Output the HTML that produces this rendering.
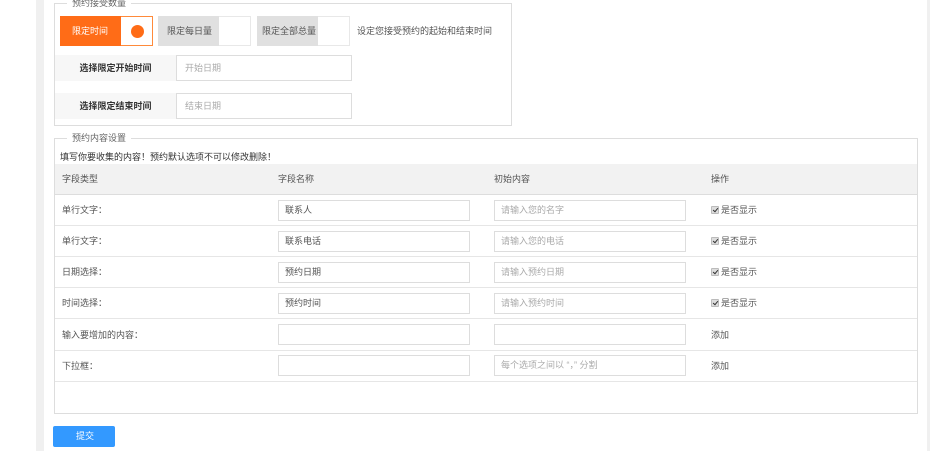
<!DOCTYPE html>
<html><head><meta charset="utf-8"><style>
*{margin:0;padding:0;box-sizing:border-box}
body{width:930px;height:451px;overflow:hidden;background:#fff;font-family:"Liberation Sans","Noto Sans CJK SC",sans-serif;font-size:9px;color:#555;position:relative}
.a{position:absolute}
.strip{background:#f0f0f0}
.bd{border:1px solid #ddd}
.lg{background:#fff;padding:0 5px;color:#666;font-size:9px;line-height:10px}
.inp{position:absolute;border:1px solid #ddd;background:#fff;height:21px;line-height:19px;padding-left:6px;color:#555;font-size:9px}
.ph{color:#aaa}
.hl{position:absolute;left:55px;width:862px;height:1px;background:#e6e6e6}
.t{position:absolute;line-height:12px}
.cb{display:inline-block;width:8px;height:8px;background:#ddd;border:1px solid #bbb;border-radius:1px;vertical-align:-1px;margin-right:2px;position:relative}
.cb:after{content:"";position:absolute;left:2px;top:0;width:2px;height:4px;border:solid #333;border-width:0 1.5px 1.5px 0;transform:rotate(40deg)}
</style></head><body>
<div class="a strip" style="left:36px;top:0;width:8px;height:451px"></div>
<div class="a strip" style="left:927px;top:0;width:3px;height:451px"></div>

<div class="a bd" style="left:54px;top:3px;width:458px;height:123px"></div>
<div class="a lg" style="left:67px;top:-2px">预约接受数量</div>
<div class="a" style="left:60px;top:16px;width:93px;height:30px;border:1px solid #ff8a3a;background:#fff"></div>
<div class="a" style="left:60px;top:16px;width:61px;height:30px;background:#ff6c17;color:#fff;line-height:30px;padding-left:12px">限定时间</div>
<div class="a" style="left:131px;top:25px;width:13px;height:13px;border-radius:50%;background:#ff6c17"></div>
<div class="a" style="left:158px;top:16px;width:93px;height:30px;border:1px solid #e8e8e8"></div>
<div class="a" style="left:158px;top:16px;width:61px;height:30px;background:#e0e0e0;line-height:30px;padding-left:9px;color:#555">限定每日量</div>
<div class="a" style="left:257px;top:16px;width:93px;height:30px;border:1px solid #e8e8e8"></div>
<div class="a" style="left:257px;top:16px;width:61px;height:30px;background:#e0e0e0;line-height:30px;padding-left:5px;color:#555">限定全部总量</div>
<div class="t" style="left:357px;top:25px;color:#555">设定您接受预约的起始和结束时间</div>
<div class="a" style="left:55px;top:55px;width:121px;height:26px;background:#f7f7f7;line-height:26px;text-align:center;font-weight:bold;color:#333">选择限定开始时间</div>
<div class="inp" style="left:176px;top:55px;width:176px;height:26px;line-height:24px;padding-left:8px"><span class="ph">开始日期</span></div>
<div class="a" style="left:55px;top:93px;width:121px;height:26px;background:#f7f7f7;line-height:26px;text-align:center;font-weight:bold;color:#333">选择限定结束时间</div>
<div class="inp" style="left:176px;top:93px;width:176px;height:26px;line-height:24px;padding-left:8px"><span class="ph">结束日期</span></div>

<div class="a bd" style="left:54px;top:138px;width:864px;height:276px"></div>
<div class="a lg" style="left:67px;top:133px">预约内容设置</div>
<div class="t" style="left:60px;top:151px;color:#333">填写你要收集的内容！预约默认选项不可以修改删除！</div>
<div class="a" style="left:55px;top:164px;width:862px;height:30px;background:#f2f2f2"></div>
<div class="hl" style="top:194px;background:#ddd"></div>
<div class="t" style="left:62px;top:173px">字段类型</div>
<div class="t" style="left:278px;top:173px">字段名称</div>
<div class="t" style="left:494px;top:173px">初始内容</div>
<div class="t" style="left:711px;top:173px">操作</div>

<div class="hl" style="top:225px"></div>
<div class="hl" style="top:256px"></div>
<div class="hl" style="top:287px"></div>
<div class="hl" style="top:318px"></div>
<div class="hl" style="top:350px"></div>
<div class="hl" style="top:381px"></div>

<div class="t" style="left:62px;top:204px">单行文字：</div>
<div class="inp" style="left:278px;top:200px;width:192px">联系人</div>
<div class="inp" style="left:494px;top:200px;width:192px"><span class="ph">请输入您的名字</span></div>
<div class="t" style="left:711px;top:204px"><span class="cb"></span>是否显示</div>

<div class="t" style="left:62px;top:235px">单行文字：</div>
<div class="inp" style="left:278px;top:231px;width:192px">联系电话</div>
<div class="inp" style="left:494px;top:231px;width:192px"><span class="ph">请输入您的电话</span></div>
<div class="t" style="left:711px;top:235px"><span class="cb"></span>是否显示</div>

<div class="t" style="left:62px;top:266px">日期选择：</div>
<div class="inp" style="left:278px;top:262px;width:192px">预约日期</div>
<div class="inp" style="left:494px;top:262px;width:192px"><span class="ph">请输入预约日期</span></div>
<div class="t" style="left:711px;top:266px"><span class="cb"></span>是否显示</div>

<div class="t" style="left:62px;top:297px">时间选择：</div>
<div class="inp" style="left:278px;top:293px;width:192px">预约时间</div>
<div class="inp" style="left:494px;top:293px;width:192px"><span class="ph">请输入预约时间</span></div>
<div class="t" style="left:711px;top:297px"><span class="cb"></span>是否显示</div>

<div class="t" style="left:62px;top:329px">输入要增加的内容：</div>
<div class="inp" style="left:278px;top:324px;width:192px"></div>
<div class="inp" style="left:494px;top:324px;width:192px"></div>
<div class="t" style="left:711px;top:329px">添加</div>

<div class="t" style="left:62px;top:360px">下拉框：</div>
<div class="inp" style="left:278px;top:355px;width:192px"></div>
<div class="inp" style="left:494px;top:355px;width:192px"><span class="ph">每个选项之间以 “，” 分割</span></div>
<div class="t" style="left:711px;top:360px">添加</div>

<div class="a" style="left:53px;top:426px;width:62px;height:21px;background:#3399ff;border-radius:2px;color:#fff;text-align:center;line-height:21px;padding-left:2px">提交</div>
</body></html>
